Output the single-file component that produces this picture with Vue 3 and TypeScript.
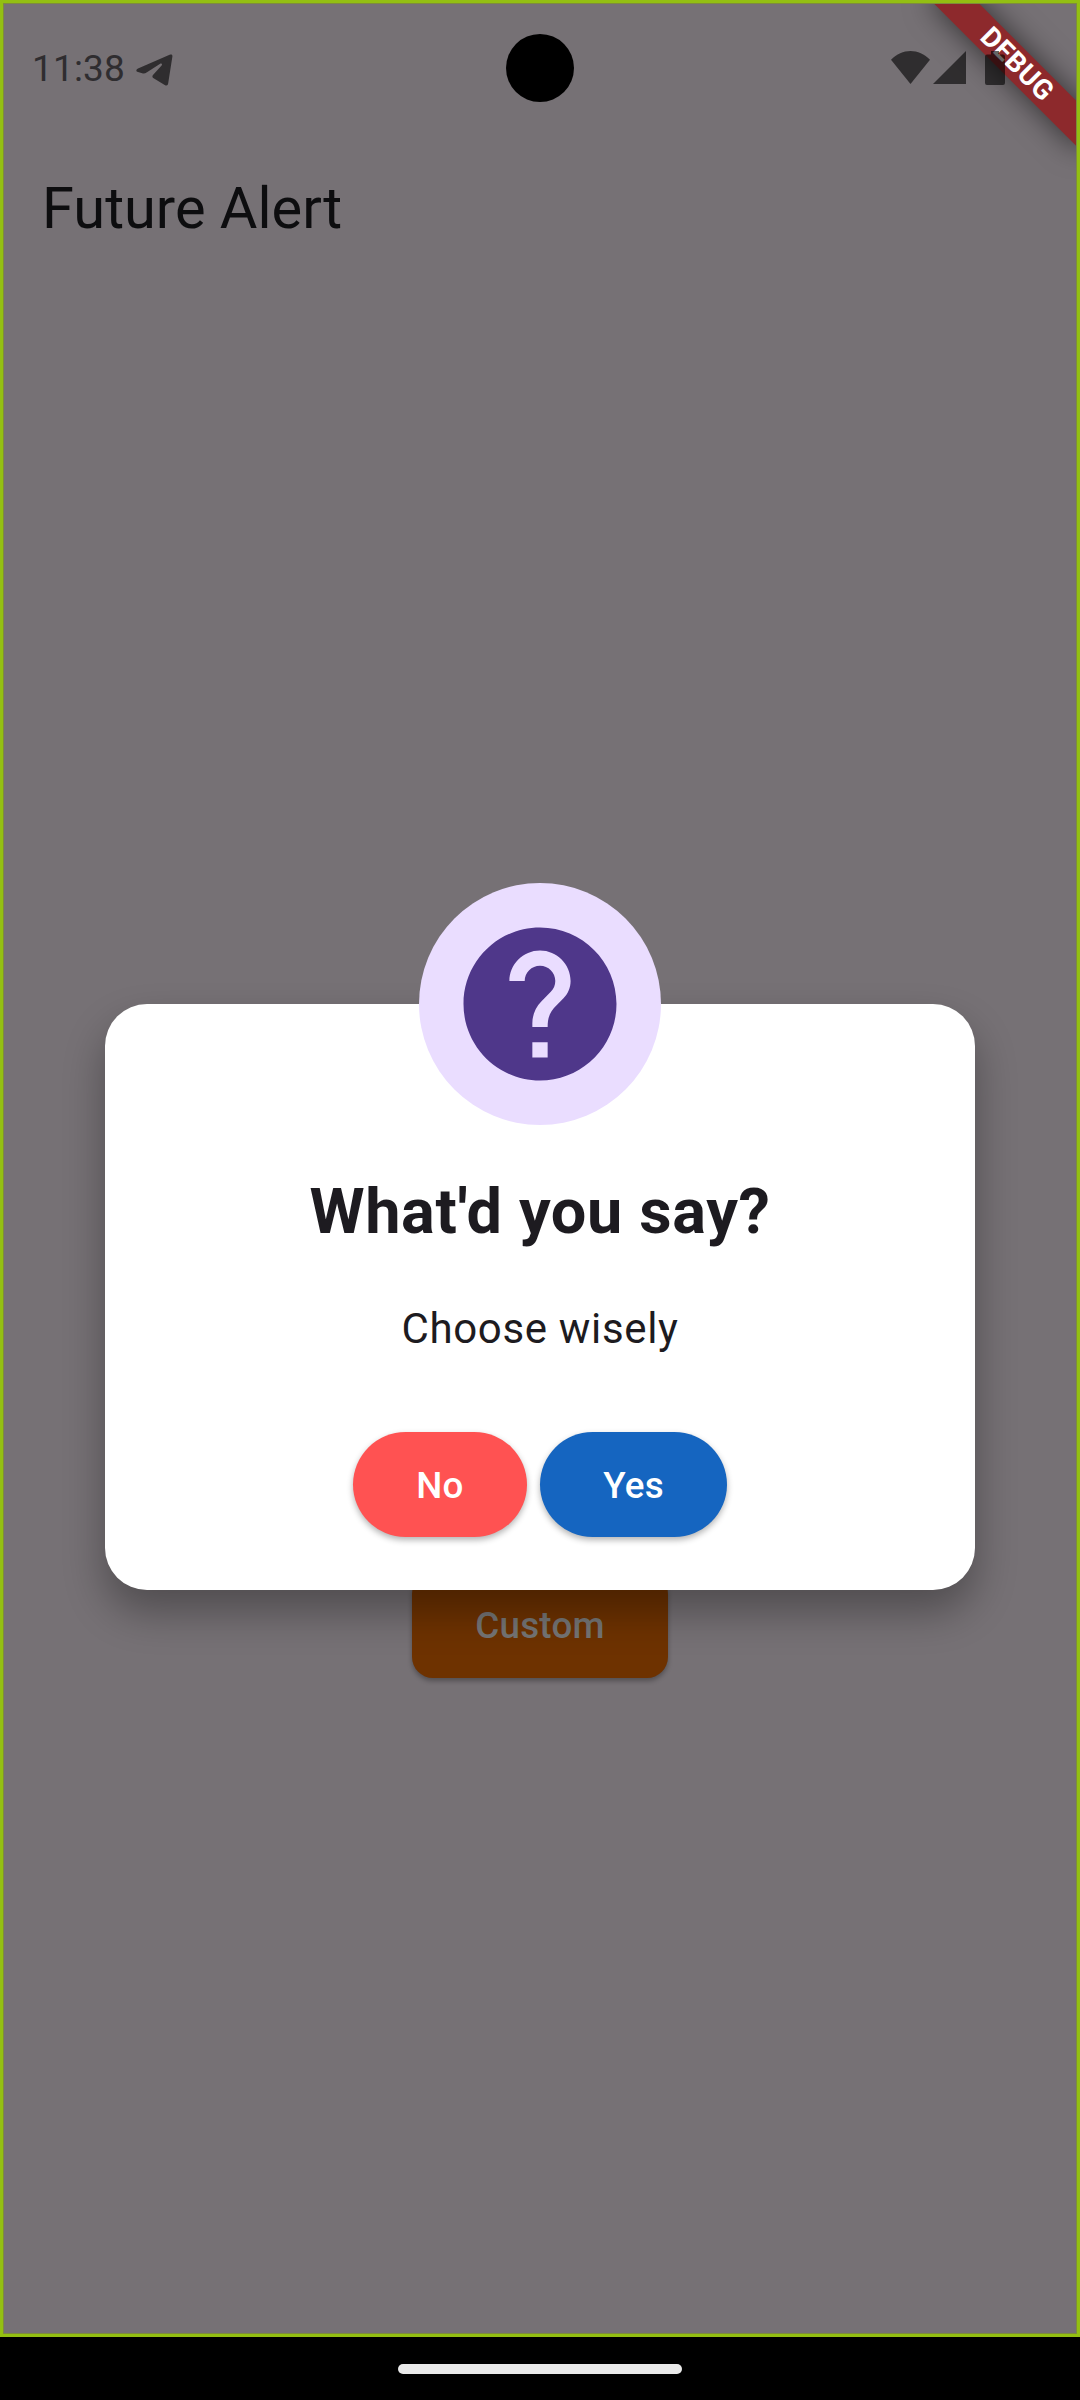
<script setup lang="ts">
interface Action {
  label: string
  kind: string
}

const time: string = '11:38'
const actions: Action[] = [
  { label: 'No', kind: 'no' },
  { label: 'Yes', kind: 'yes' },
]
</script>

<template>
  <div class="device">
    <main class="screen">
      <header class="status">
        <span class="time">{{ time }}</span>
        <svg class="plane" viewBox="0 0 37 33" width="37" height="33">
          <path d="M2 14.600 33.600.8C35.800 0 36.600 .9 36.400 2.600L32.200 29.300C31.800 31.700 30.500 32 28.700 30.900L17.600 24.300C16 23.200 16 21.800 17.400 20.600L25.600 11.600C26.600 10 25.600 9 23.800 10L11 18.300C9.300 19.400 7.800 19.700 6.200 19.300L2 18.100C-.2 17.300-.2 15.700 2 14.600Z" />
        </svg>
        <span class="spacer"></span>
        <svg class="wifi" viewBox="0 0 39 33" width="39" height="33">
          <path d="M0 8.800C11-2.900 28-2.900 39 8.800L19.500 33Z" />
        </svg>
        <svg class="cell" viewBox="0 0 33 33" width="33" height="33">
          <path d="M33 0V33H0Z" />
        </svg>
        <svg class="battery" viewBox="0 0 20 34" width="20" height="34">
          <path d="M6 0H14V3.500H18Q20 3.500 20 5.500V32Q20 34 18 34H2Q0 34 0 32V5.500Q0 3.500 2 3.500H6Z" />
        </svg>
      </header>
      <h1 class="title">Future Alert</h1>
      <button class="custom">Custom</button>

      <section class="dialog">
        <div class="badge">
          <svg viewBox="1.935 1.935 20.130 20.130" width="154" height="154">
            <path d="M12 2C6.480 2 2 6.480 2 12s4.480 10 10 10 10-4.480 10-10S17.520 2 12 2zm1 17h-2v-2h2v2zm2.070-7.750l-.9.920C13.450 12.900 13 13.500 13 15h-2v-.5c0-1.100.45-2.100 1.170-2.830l1.240-1.260c.37-.36.59-.86.59-1.410 0-1.100-.9-2-2-2s-2 .9-2 2H8c0-2.210 1.790-4 4-4s4 1.790 4 4c0 .88-.36 1.680-.93 2.250z" />
          </svg>
        </div>
        <h2>What'd you say?</h2>
        <p>Choose wisely</p>
        <div class="actions">
          <button v-for="a in actions" :key="a.label" :class="a.kind">{{ a.label }}</button>
        </div>
      </section>

      <div class="banner-clip"><div class="banner">DEBUG</div></div>
      <div class="camera"></div>
    </main>
    <footer class="nav"><span class="handle"></span></footer>
  </div>
</template>

<style>
body {
  margin: 0;
}
</style>

<style scoped>
.device {
  width: 1080px;
  height: 2400px;
  display: flex;
  flex-direction: column;
  background: #000;
  font-family: Roboto, sans-serif;
  overflow: hidden;
}
.screen {
  position: relative;
  box-sizing: border-box;
  height: 2337px;
  background: #767175;
  display: flex;
  flex-direction: column;
}
.screen::after {
  content: '';
  position: absolute;
  inset: 0;
  border: 3px solid #93bf12;
  box-shadow: inset 0 0 0 1px #7e8c3c;
}
.status {
  position: relative;
  z-index: 2;
  display: flex;
  align-items: flex-start;
  height: 136px;
  box-sizing: border-box;
  padding: 51px 75px 0 32px;
}
.status svg {
  fill: rgba(0, 0, 0, 0.6);
}
.time {
  font-size: 37px;
  line-height: 44px;
  margin-top: -4px;
  letter-spacing: 0.15px;
  color: #2f2d30;
  width: 104px;
  white-space: nowrap;
}
.plane {
  margin-top: 3px;
}
.spacer {
  flex: 1;
}
.cell {
  margin-left: 3px;
}
.battery {
  margin-left: 19px;
}
.title {
  margin: 0;
  height: 147px;
  padding-left: 42px;
  font-size: 57.75px;
  font-weight: 400;
  line-height: 144px;
  color: #0d0d0f;
}
button {
  border: 0;
  padding: 0 63px;
  height: 105px;
  font-family: inherit;
  font-size: 36.75px;
  font-weight: 500;
  letter-spacing: 0.26px;
  color: #fff;
}
.custom {
  align-self: center;
  width: 256px;
  margin-top: 1290px;
  border-radius: 21px;
  background: #6e3200;
  color: #757575;
  box-shadow: 0 3px 5px rgba(0, 0, 0, 0.3);
}
.dialog {
  position: absolute;
  left: 105px;
  top: 1004px;
  width: 870px;
  height: 586px;
  box-sizing: border-box;
  border-radius: 42px;
  background: #fff;
  box-shadow: 0 22px 42px rgba(0, 0, 0, 0.32);
  display: flex;
  flex-direction: column;
  align-items: center;
}
.badge {
  width: 242px;
  height: 242px;
  margin-top: -121px;
  border-radius: 50%;
  background: #eaddff;
  display: flex;
  align-items: center;
  justify-content: center;
}
.badge svg {
  fill: #4f378a;
}
h2 {
  margin: 45px 0 0;
  font-size: 63px;
  line-height: 84px;
  font-weight: 700;
  letter-spacing: 0.66px;
  color: #1d1b20;
}
p {
  margin: 43px 0 0;
  font-size: 42px;
  line-height: 63px;
  letter-spacing: 0.66px;
  color: #1d1b20;
}
.actions {
  display: flex;
  gap: 13px;
  margin-top: 72px;
}
.actions button {
  padding-top: 2px;
  border-radius: 53px;
  box-shadow: 0 3px 6px rgba(0, 0, 0, 0.3);
}
.actions .no {
  width: 174px;
  background: #ff5252;
}
.actions .yes {
  width: 187px;
  background: #1565c0;
}
.banner-clip {
  position: absolute;
  right: 0;
  top: 0;
  width: 240px;
  height: 240px;
  overflow: hidden;
}
.banner {
  position: absolute;
  left: 135px;
  top: 73.500px;
  width: 210px;
  height: 31.500px;
  transform-origin: 105px -73.500px;
  transform: rotate(45deg);
  background: #8d292c;
  box-shadow: 0 0 30px rgba(0, 0, 0, 0.6);
  color: #fff;
  font-size: 27.800px;
  line-height: 32.500px;
  font-weight: 700;
  letter-spacing: 0.4px;
  text-indent: 1px;
  text-align: center;
}
.camera {
  position: absolute;
  left: 506px;
  top: 34px;
  width: 68px;
  height: 68px;
  border-radius: 50%;
  background: #000;
}
.nav {
  height: 63px;
  display: flex;
  justify-content: center;
  align-items: flex-start;
}
.handle {
  width: 284px;
  height: 10px;
  margin-top: 27px;
  border-radius: 5px;
  background: #eaeaea;
}
</style>
